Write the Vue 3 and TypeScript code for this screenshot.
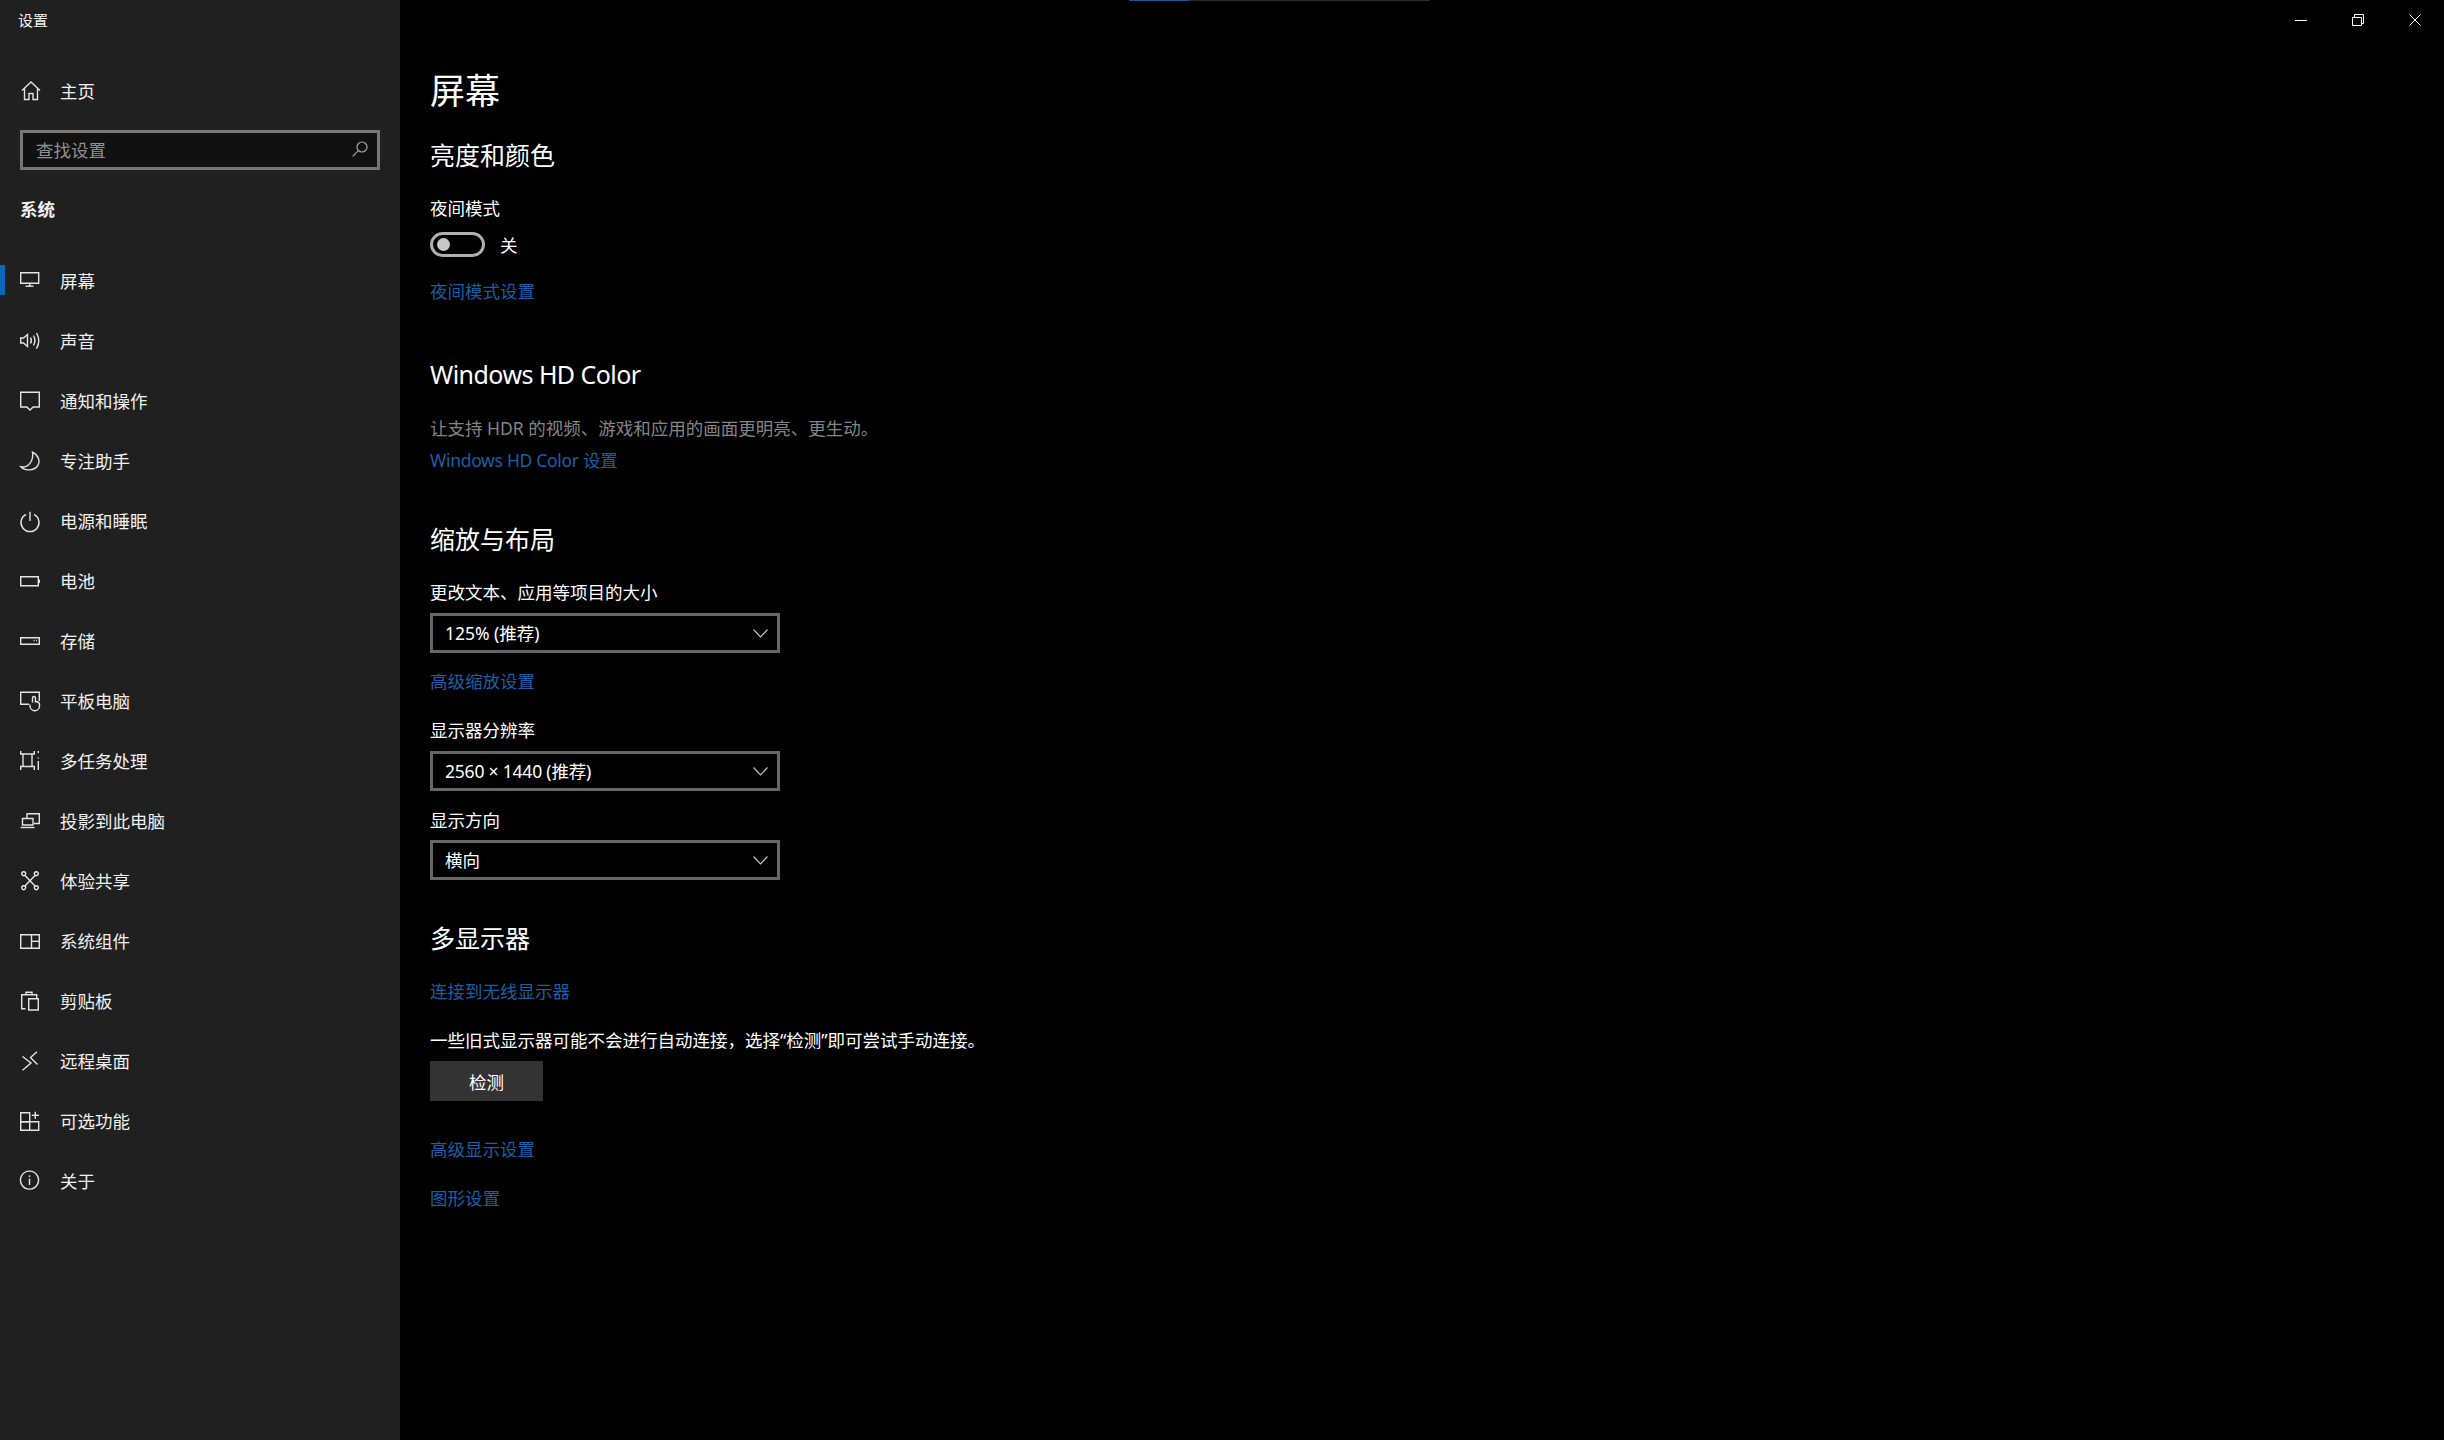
<script setup lang="ts">
interface NavItem {
  label: string
  paths: string[]
  active?: boolean
}

const navItems: NavItem[] = [
  { label: '屏幕', active: true, paths: ['M0.7 2.7H18.7V13.2H0.7Z', 'M9.7 13.2V16.7', 'M5.5 16.2H13.5'] },
  { label: '声音', paths: ['M0.7 8H3.5L7.5 4.5V16.5L3.5 13H0.7Z', 'M10.5 7.5Q12.3 10.5 10.5 13.5', 'M13.5 5.5Q16.3 10.5 13.5 15.5', 'M16.5 3Q21 10.5 16.5 18.7'] },
  { label: '通知和操作', paths: ['M0.7 2.2H19.3V17H13.2L10 20L6.8 17H0.7Z'] },
  { label: '专注助手', paths: ['M12.5 2.2C18 5 21 11 17.5 16C14 20.5 5 21.5 0.9 16.8C8 18.2 14 11 12.5 2.2Z'] },
  { label: '电源和睡眠', paths: ['M6 4.5A9 9 0 1 0 14 4.5', 'M10 1.7V11'] },
  { label: '电池', paths: ['M0.7 6.7H18.3V15.7H0.7Z', 'M19.3 9.5V13'] },
  { label: '存储', paths: ['M0.7 7.7H19.3V14.3H0.7Z', 'M13.5 10.5H14.5', 'M16 10.5H17'] },
  { label: '平板电脑', paths: ['M9 14.2H0.7V2.2H19.3V11', 'M12.5 12.5V8a1.5 1.5 0 0 1 3 0V12.5', 'M15.5 11.5C18 11.7 19.5 12.5 19.5 14.5V16A4.5 4.5 0 0 1 10 16V14.5'] },
  { label: '多任务处理', paths: ['M0.7 1V4H14.3V1', 'M0.7 20V16.5H14.3V20', 'M3 4V16.5', 'M12 4V16.5', 'M18.3 1V3', 'M18.3 7.5V8.5', 'M18.3 11V20'] },
  { label: '投影到此电脑', paths: ['M7 8V3.8H19.3V13.5H14', 'M2.5 8.5H13V15H2.5Z', 'M0.7 17.5H14.5'] },
  { label: '体验共享', paths: ['M5 5.5L15 16', 'M15 5.5L5 16', 'M3.7 1.7a2 2 0 1 0 .01 0Z', 'M16.3 1.7a2 2 0 1 0 .01 0Z', 'M3.7 15.7a2 2 0 1 0 .01 0Z', 'M16.3 15.7a2 2 0 1 0 .01 0Z'] },
  { label: '系统组件', paths: ['M0.7 4.7H19.3V18.2H0.7Z', 'M11.5 4.7V18.2', 'M11.5 11.3H19.3'] },
  { label: '剪贴板', paths: ['M5.5 18.7H1.7V4.7H16.7V8', 'M6 4.5V2.2H12V4.5', 'M8.7 8.7H18.3V20H8.7Z'] },
  { label: '远程桌面', paths: ['M2.5 6.5L11 13L2.5 20.2', 'M17 1.7L10.5 7.5L17.5 14.5'] },
  { label: '可选功能', paths: ['M0.7 2.7H9.7V11.7H0.7Z', 'M0.7 11.7H18.7V20.2H0.7Z', 'M9.7 11.7V20.2', 'M15.3 1.7V9', 'M11.8 5.3H19'] },
  { label: '关于', paths: ['M9.5 1.1a9 9 0 1 0 .01 0Z', 'M9.5 8.5V15', 'M9.5 5.3V7'] }
]
</script>

<template>
  <div class="app">
    <div class="progress"><div class="progress-fill"></div></div>
    <aside class="sidebar">
      <div class="app-title">设置</div>
      <div class="home-row">
        <svg class="icon" viewBox="0 0 20 20">
          <path d="M2 10.5L11 2L20 10.5M4.5 8.5V19.5H9V13.5H13V19.5H17.5V8.5" />
        </svg>
        <span>主页</span>
      </div>
      <div class="search">
        <span>查找设置</span>
        <svg class="search-icon" viewBox="0 0 16 16">
          <circle cx="10" cy="6" r="5" />
          <path d="M6.3 9.7L0.7 15.3" />
        </svg>
      </div>
      <div class="group-title">系统</div>
      <nav class="nav">
        <div v-for="item in navItems" :key="item.label" class="nav-row" :class="{ active: item.active }">
          <svg class="icon" viewBox="0 0 20 20">
            <path v-for="d in item.paths" :key="d" :d="d" />
          </svg>
          <span>{{ item.label }}</span>
        </div>
      </nav>
    </aside>

    <main class="main">
      <div class="titlebar">
        <button class="win-btn" aria-label="最小化">
          <svg viewBox="0 0 12 12"><path d="M0 6.5H12" /></svg>
        </button>
        <button class="win-btn" aria-label="还原">
          <svg viewBox="0 0 12 12"><path d="M0.5 3.5H9.5V11.5H0.5Z" /><path d="M2.5 3.5V0.5H11.5V9.5H9.5" /></svg>
        </button>
        <button class="win-btn" aria-label="关闭">
          <svg viewBox="0 0 12 12"><path d="M0.5 0.5L11.5 11.5M11.5 0.5L0.5 11.5" /></svg>
        </button>
      </div>

      <div class="content">
        <h1 class="page-title">屏幕</h1>

        <h2 class="h2 first">亮度和颜色</h2>
        <div class="label m22">夜间模式</div>
        <div class="toggle-row">
          <span class="toggle"><span class="knob"></span></span>
          <span class="label">关</span>
        </div>
        <a class="link m21">夜间模式设置</a>

        <h2 class="h2 tight m52">Windows HD Color</h2>
        <div class="label gray m23">让支持 HDR 的视频、游戏和应用的画面更明亮、更生动。</div>
        <a class="link latin m6">Windows HD Color 设置</a>

        <h2 class="h2 m48">缩放与布局</h2>
        <div class="label m22">更改文本、应用等项目的大小</div>
        <div class="select m8">
          <span>125% (推荐)</span>
          <svg class="chev" viewBox="0 0 15 9"><path d="M0.5 0.5L7.5 8L14.5 0.5" /></svg>
        </div>
        <a class="link m15">高级缩放设置</a>
        <div class="label m23">显示器分辨率</div>
        <div class="select m8">
          <span class="numeric">2560 × 1440 (推荐)</span>
          <svg class="chev" viewBox="0 0 15 9"><path d="M0.5 0.5L7.5 8L14.5 0.5" /></svg>
        </div>
        <div class="label m16">显示方向</div>
        <div class="select m7">
          <span>横向</span>
          <svg class="chev" viewBox="0 0 15 9"><path d="M0.5 0.5L7.5 8L14.5 0.5" /></svg>
        </div>

        <h2 class="h2 m40">多显示器</h2>
        <a class="link m22">连接到无线显示器</a>
        <div class="label m23">一些旧式显示器可能不会进行自动连接，选择“检测”即可尝试手动连接。</div>
        <button class="detect">检测</button>
        <a class="link m35">高级显示设置</a>
        <a class="link m23">图形设置</a>
      </div>
    </main>
  </div>
</template>

<style scoped>
.app {
  position: relative;
  display: flex;
  width: 2444px;
  height: 1440px;
  overflow: hidden;
  background: #000;
  color: #fff;
  font-family: "Noto Sans", "Noto Sans CJK SC", sans-serif;
  font-size: 17.5px;
}
.progress {
  position: absolute;
  top: 0;
  left: 1129px;
  width: 301px;
  height: 1px;
  background: #2b2b2b;
}
.progress-fill {
  width: 60px;
  height: 1px;
  background: #1a5590;
}
.sidebar {
  width: 400px;
  flex: none;
  background: #202020;
  color: #f0f0f0;
}
.app-title {
  height: 40px;
  padding-left: 18px;
  font-size: 15px;
  line-height: 40px;
}
.home-row,
.nav-row {
  position: relative;
  display: flex;
  align-items: center;
  gap: 20px;
  height: 60px;
  padding-left: 20px;
}
.home-row {
  margin-top: 20px;
}
.home-row span,
.nav-row span {
  line-height: 26px;
  padding-top: 2px;
}
.nav-row.active::before {
  content: "";
  position: absolute;
  left: 0;
  top: 15px;
  width: 5px;
  height: 30px;
  background: #0a66b8;
}
.icon {
  width: 20px;
  height: 20px;
  flex: none;
  overflow: visible;
  fill: none;
  stroke: #e4e4e4;
  stroke-width: 1.4;
}
.search {
  display: flex;
  align-items: center;
  justify-content: space-between;
  box-sizing: border-box;
  width: 360px;
  height: 40px;
  margin: 10px 0 0 20px;
  padding: 0 9px 2px 13px;
  border: 3px solid #777;
  background: #111;
  color: #8f8f8f;
}
.search-icon {
  width: 16px;
  height: 16px;
  fill: none;
  stroke: #a8a8a8;
  stroke-width: 1.2;
}
.group-title {
  height: 80px;
  padding-left: 20px;
  font-weight: 700;
  line-height: 78px;
}
.main {
  flex: 1;
  min-width: 0;
}
.titlebar {
  display: flex;
  justify-content: flex-end;
  height: 40px;
  padding-right: 1px;
}
.win-btn {
  display: flex;
  align-items: center;
  justify-content: center;
  width: 57px;
  height: 40px;
  padding: 0;
  border: 0;
  background: none;
}
.win-btn svg {
  width: 12px;
  height: 12px;
  fill: none;
  stroke: #fff;
  stroke-width: 1;
}
.content {
  display: flex;
  flex-direction: column;
  align-items: flex-start;
  padding: 26px 0 0 30px;
}
.page-title {
  margin: 0;
  font-size: 35px;
  font-weight: 400;
  line-height: 50px;
}
.h2 {
  margin: 0;
  font-size: 25px;
  font-weight: 400;
  line-height: 36px;
}
.label,
.link {
  line-height: 26px;
}
.link {
  color: #1a5fa6;
}
.gray {
  color: #858585;
}
.latin {
  letter-spacing: -0.3px;
}
.tight {
  letter-spacing: -0.55px;
}
.numeric {
  letter-spacing: -0.2px;
}
.first { margin-top: 21px; }
.m6 { margin-top: 6px; }
.m7 { margin-top: 7px; }
.m8 { margin-top: 8px; }
.m15 { margin-top: 15px; }
.m16 { margin-top: 16px; }
.m21 { margin-top: 21px; }
.m22 { margin-top: 22px; }
.m23 { margin-top: 23px; }
.m35 { margin-top: 35px; }
.m40 { margin-top: 40px; }
.m48 { margin-top: 48px; }
.m52 { margin-top: 52px; }
.toggle-row {
  display: flex;
  align-items: center;
  gap: 15px;
  height: 25px;
  margin-top: 11px;
}
.toggle {
  display: flex;
  align-items: center;
  box-sizing: border-box;
  width: 55px;
  height: 25px;
  padding-left: 4px;
  border: 3px solid #b0b0b0;
  border-radius: 13px;
}
.knob {
  width: 13px;
  height: 13px;
  border-radius: 50%;
  background: #c8c8c8;
}
.select {
  display: flex;
  align-items: center;
  justify-content: space-between;
  box-sizing: border-box;
  width: 350px;
  height: 40px;
  padding: 0 9px 0 12px;
  border: 3px solid #666;
  line-height: 26px;
}
.chev {
  width: 15px;
  height: 9px;
  fill: none;
  stroke: #c8c8c8;
  stroke-width: 1.1;
}
.detect {
  width: 113px;
  height: 40px;
  margin-top: 8px;
  padding: 0;
  border: 0;
  background: #333;
  color: #fff;
  font: inherit;
}
</style>
